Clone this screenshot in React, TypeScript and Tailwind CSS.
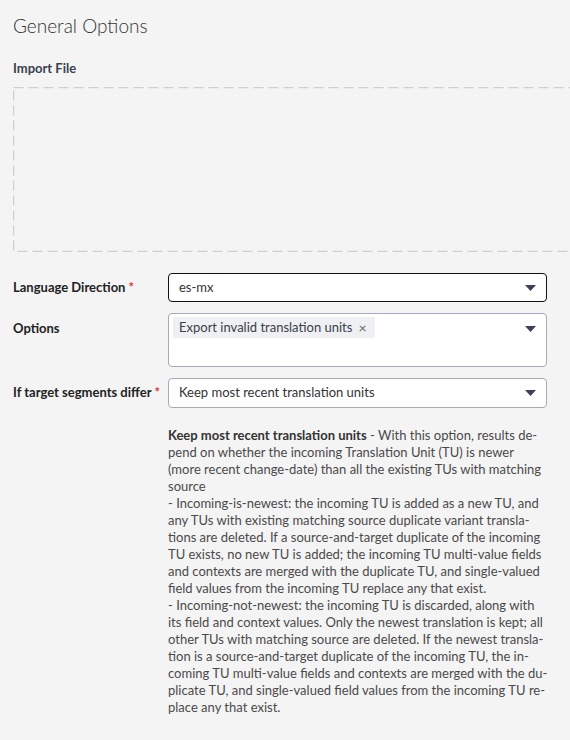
import React from "react";

const Caret = () => (
  <svg width="11" height="6" viewBox="0 0 11 6" className="shrink-0">
    <path d="M0 0 H11 L5.5 6 Z" fill="#3d4356" />
  </svg>
);

const lines: React.ReactNode[] = [
  <>
    <span className="font-bold text-[#333]">Keep most recent translation units</span> - With this option, results de-
  </>,
  "pend on whether the incoming Translation Unit (TU) is newer",
  "(more recent change-date) than all the existing TUs with matching",
  "source",
  "- Incoming-is-newest: the incoming TU is added as a new TU, and",
  "any TUs with existing matching source duplicate variant transla-",
  "tions are deleted. If a source-and-target duplicate of the incoming",
  "TU exists, no new TU is added; the incoming TU multi-value fields",
  "and contexts are merged with the duplicate TU, and single-valued",
  "field values from the incoming TU replace any that exist.",
  "- Incoming-not-newest: the incoming TU is discarded, along with",
  "its field and context values. Only the newest translation is kept; all",
  "other TUs with matching source are deleted. If the newest transla-",
  "tion is a source-and-target duplicate of the incoming TU, the in-",
  "coming TU multi-value fields and contexts are merged with the du-",
  "plicate TU, and single-valued field values from the incoming TU re-",
  "place any that exist.",
];

export default function App() {
  return (
    <div
      className="w-[570px] min-h-[740px] overflow-hidden bg-[#f4f4f4] pl-[13px] pr-[23px]"
      style={{ fontFamily: "Lato, 'Noto Sans', sans-serif" }}
    >
      <h1 className="pt-[12px] text-[19px] leading-[28px] font-light text-[#333]">General Options</h1>
      <div className="mt-[20px] text-[13px] leading-[16px] font-bold text-[#374151]">Import File</div>
      <div className="relative mt-[11px] h-[165px] w-[570px]">
        <svg className="absolute inset-0" width="570" height="165">
          <rect x="0.5" y="0.5" width="600" height="164" fill="none" stroke="#cfcfcf" strokeWidth="1.5" strokeDasharray="10 5" />
        </svg>
      </div>

      <div className="mt-[21px] flex items-center">
        <div className="w-[155px] text-[13px] font-bold text-[#222]">
          Language Direction <span className="text-[#d9363e]">*</span>
        </div>
        <div className="flex h-[29px] flex-1 items-center justify-between rounded-[4px] border border-[#111] bg-white pl-[10px] pr-[10px] text-[13px] text-[#333]">
          <span>es-mx</span>
          <Caret />
        </div>
      </div>

      <div className="mt-[11px] flex items-start">
        <div className="w-[155px] pt-[6px] text-[13px] font-bold text-[#222]">Options</div>
        <div className="flex h-[54px] flex-1 items-start justify-between rounded-[4px] border border-[#a4acb9] bg-white pl-[4px] pr-[10px] pt-[3px]">
          <span className="flex h-[21px] items-center gap-[6px] bg-[#eef0f3] pl-[6px] pr-[8px] text-[13px] text-[#3a3f4a]">
            Export invalid translation units
            <span className="text-[14px] text-[#666]">×</span>
          </span>
          <span className="pt-[9px]">
            <Caret />
          </span>
        </div>
      </div>

      <div className="mt-[11px] flex items-center">
        <div className="w-[155px] text-[13px] font-bold text-[#222]">
          If target segments differ <span className="text-[#d9363e]">*</span>
        </div>
        <div className="flex h-[30px] flex-1 items-center justify-between rounded-[4px] border border-[#a4acb9] bg-white pl-[10px] pr-[10px] text-[13px] text-[#333]">
          <span>Keep most recent translation units</span>
          <Caret />
        </div>
      </div>

      <div className="ml-[155px] mt-[19px] pb-[20px] text-[13px] leading-[17px] text-[#4a4a4a]">
        {lines.map((l, i) => (
          <div key={i} className="whitespace-nowrap">
            {l}
          </div>
        ))}
      </div>
    </div>
  );
}
